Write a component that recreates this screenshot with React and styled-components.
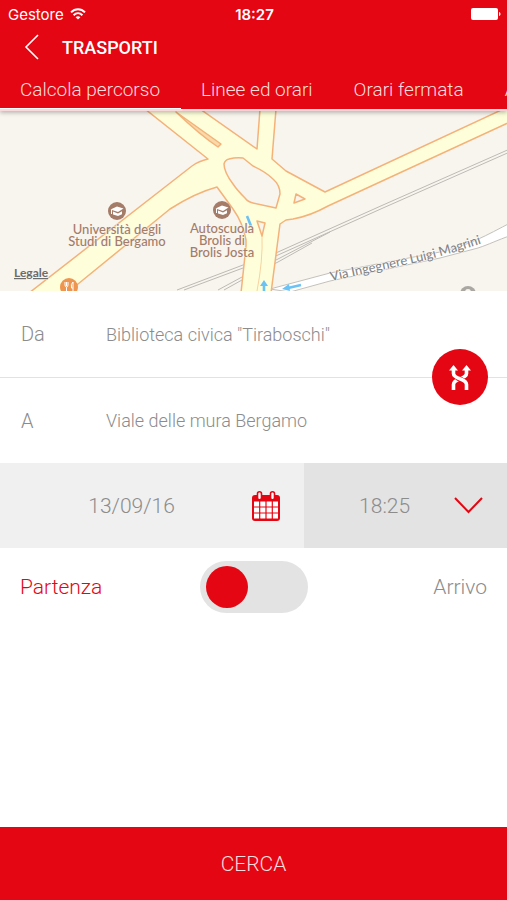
import React, {useState} from 'react';
import styled, {createGlobalStyle} from 'styled-components';

const red = "#e40612";
const grey = "#8c8c8c";

const GlobalStyle = createGlobalStyle`
  * {
    box-sizing: border-box;
  }

  body {
    margin: 0;
    background: #fff;
    font-family: Roboto, "Liberation Sans", sans-serif;
    font-weight: 300;
  }

  button, input, select {
    font: inherit;
    color: inherit;
    margin: 0;
    padding: 0;
    border: 0;
    background: none;
    border-radius: 0;
    outline: none;
  }

  button, select {
    cursor: pointer;
  }
`;

const Page = styled.div`
  display: flex;
  flex-direction: column;
  min-height: 100vh;
`;

const Header = styled.header`
  position: relative;
  z-index: 1;
  background: ${red};
  color: #fff;
  border-bottom: 2px solid #fbd9da;
  box-shadow: 0 2px 4px #00000040;
`;

const StatusBar = styled.div`
  display: grid;
  grid-template-columns: 1fr auto 1fr;
  align-items: center;
  height: 28px;
  padding: 0 6px 0 8px;
  font-family: Inter, "Liberation Sans", sans-serif;
  font-size: 15px;
  font-weight: 400;
`;

const Carrier = styled.div`
  display: flex;
  align-items: center;
  gap: 6px;
`;

const Clock = styled.time`
  font-weight: 600;
`;

const BatterySvg = styled.svg`
  justify-self: end;
`;

const TitleBar = styled.div`
  display: flex;
  align-items: center;
  gap: 22px;
  height: 38px;
  padding-left: 24px;
`;

const Back = styled.button`
  display: flex;
`;

const Title = styled.h1`
  margin: 0;
  font-size: 18px;
  font-weight: 500;
`;

const Tabs = styled.nav`
  display: flex;
  overflow: hidden;
`;

const Tab = styled.a`
  flex: none;
  height: 43px;
  padding: 0 21px 0 20px;
  border-bottom: 1px solid ${props => props.$active ? "#fff" : "transparent"};
  color: #ffdcdd;
  font-size: 19px;
  line-height: 48px;
  text-decoration: none;
`;

const MapSvg = styled.svg`
  display: block;
  width: 100%;
  height: 180px;
  background: #f8f5ef;
`;

const Poi = styled.text`
  fill: #a47c68;
  stroke: #f8f5ef;
  stroke-width: 1px;
  paint-order: stroke;
  text-anchor: middle;
  font-family: Lato, "Noto Sans", sans-serif;
  font-size: 13px;
  font-weight: 500;
`;

const Street = styled(Poi)`
  fill: #858585;
  stroke: #fff;
  text-anchor: start;
`;

const Legal = styled(Poi)`
  fill: #6c6c6c;
  text-anchor: start;
  text-decoration: underline;
  font-size: 12px;
  font-weight: 700;
`;

const Places = styled.div`
  position: relative;
`;

const Place = styled.label`
  display: grid;
  grid-template-columns: 85px 1fr;
  align-items: center;
  height: 86px;
  padding: 0 90px 0 21px;
  color: ${grey};
  font-size: 20px;

  & + & {
    border-top: 1px solid #e2e2e2;
  }
`;

const PlaceInput = styled.input`
  width: 100%;
  font-size: 18px;
`;

const Swap = styled.button`
  position: absolute;
  top: 50%;
  right: 19px;
  display: flex;
  align-items: center;
  justify-content: center;
  width: 56px;
  height: 56px;
  border-radius: 50%;
  background: ${red};
  transform: translateY(-50%);
`;

const When = styled.div`
  display: grid;
  grid-template-columns: 3fr 2fr;
  height: 85px;
  color: ${grey};
  font-size: 21px;
`;

const Field = styled.label`
  display: grid;
  grid-template-columns: 1fr auto;
  align-items: center;
  padding: 0 24px 0 11px;
  background: ${props => props.$dark ? "#e3e3e3" : "#f0f0f0"};
`;

const DateInput = styled.input`
  width: 100%;
  min-width: 0;
  text-align: center;
`;

const TimeSelect = styled.select`
  width: 100%;
  text-align-last: center;
  appearance: none;
`;

const Direction = styled.div`
  display: grid;
  grid-template-columns: 1fr auto 1fr;
  align-items: center;
  height: 77px;
  padding: 0 20px;
  font-size: 21px;
`;

const DirectionLabel = styled.label`
  color: ${props => props.$active ? red : grey};

  &:last-child {
    text-align: right;
  }
`;

const Switch = styled.input`
  display: flex;
  align-items: center;
  width: 108px;
  height: 52px;
  padding: 0 6px;
  border-radius: 26px;
  background: #e3e3e3;
  appearance: none;
  cursor: pointer;

  &::before {
    content: "";
    width: 42px;
    height: 42px;
    border-radius: 50%;
    background: ${red};
  }

  &:checked {
    justify-content: flex-end;
  }
`;

const Submit = styled.button`
  height: 73px;
  margin-top: auto;
  background: ${red};
  color: #ffdcdd;
  font-size: 21px;
`;

const Wifi = () => (
    <svg width="16" height="12" viewBox="0 0 16 12" fill="none" stroke="#fff" strokeWidth="2">
        <path d="M1 4.4C5 .2 11 .2 15 4.4"/>
        <path d="M3.6 7.2c2.6-2.6 6.2-2.6 8.8 0"/>
        <path d="M8 11.6L5.6 9.2c1.4-1.3 3.4-1.3 4.8 0z" fill="#fff" stroke="none"/>
    </svg>
);

const Battery = () => (
    <BatterySvg width="30" height="12" viewBox="0 0 30 12" fill="#fff">
        <rect width="27" height="12" rx="2"/>
        <path d="M28 4c2 .5 2 3.5 0 4z"/>
    </BatterySvg>
);

const SwapIcon = () => (
    <svg width="22" height="25" viewBox="0 0 22 25" fill="none">
        <path d="M17.5 4v4.5c0 6-13 4.500-13 11V25" stroke="#fff" strokeWidth="3.6"/>
        <path d="M6.5 11c3 4 10 4 10.800 8" stroke={red} strokeWidth="5.4"/>
        <path d="M4.500 4v4.500c0 6 13 4.500 13 11V25" stroke="#fff" strokeWidth="3.6"/>
        <path d="M0 5.500L4.500 0 9 5.500zM13 5.500L17.500 0 22 5.500z" fill="#fff"/>
    </svg>
);

const CalendarIcon = () => (
    <svg width="28" height="30" viewBox="0 0 28 30">
        <rect y="4" width="28" height="26" rx="3" fill={red}/>
        <g fill="#fff">
            {[10.5, 16.5, 22.5].map(y => [2, 8.3, 14.6, 20.9].map(x => (
                <rect key={x + "-" + y} x={x} y={y} width="5.1" height="5"/>
            )))}
        </g>
        <g fill="#fff" stroke={red} strokeWidth="1.6">
            <rect x="5.5" y=".8" width="4" height="8" rx="2"/>
            <rect x="18.5" y=".8" width="4" height="8" rx="2"/>
        </g>
    </svg>
);

const School = ({x, y}) => (
    <g transform={`translate(${x} ${y})`}>
        <circle r="9" fill="#a47c68"/>
        <path d="M-6.500-1.500L0-4.500l6.500 2L1 1zM-4 .5L1 2.500l4-2.300v3L1 5l-5-1.500z" fill="#fff"/>
        <path d="M-5.500-1v4" stroke="#fff"/>
    </g>
);

const CityMap = () => (
    <MapSvg viewBox="0 1 507 180" preserveAspectRatio="xMidYMid slice" role="img" aria-label="Mappa">
        <g fill="none" stroke="#bdbab5" strokeWidth="1">
            <path d="M512 38L383 95 278 142 243 155 177 180M512 41L383 98 278 145 243 158 184 180"/>
            <path d="M330 122L278 149 242 167 218 180M312 133L278 152 242 170 224 180"/>
        </g>
        <path
            d="M270 179L330 163 440 142C470 135 485 126 512 112V125C495 131 490 134 478 138L440 148 330 171 290 182z"
            fill="#fff" stroke="#c4c1bc"/>
        <g fill="#feffda" stroke="#f4b279" strokeWidth="1.5" strokeLinejoin="round">
            <path d="M145-1L208 49Q199 51 192 56L29 183H67L78 174 170 99Q195 83 217 77L233 99Q243 113 246 130V136L241 183H271L280 114 286 110 293 109Q310 106 328 96L512 11V-5L325 82 286 61 272 49 276-1H260L257 39 200-1z"/>
            <path d="M176 2L221 34 218 37Q200 25 176 2z" fill="#f9d9a8"/>
            <g fill="#f8f5ef">
                <path d="M224 54Q225 50 229 49 236 47 243 48L253 56Q266 62 273 69 280 75 280 84L276 98 253 93Q248 92 245 88 237 80 233 74 224 62 224 54z"/>
                <path d="M296 84L305 89 294 93z"/>
                <path d="M257 111L265 113 262 126z"/>
            </g>
            <path d="M262 126Q263 150 257 181" fill="none" strokeWidth=".6"/>
        </g>
        <g fill="none" stroke="#6bc2f5" strokeWidth="2.6">
            <path d="M247 106l4 10M264 181v-8M301 175l-13 3"/>
            <path d="M260 176l4-6 4 6zM289 174l-7 5 8 2z" fill="#6bc2f5" stroke="none"/>
        </g>
        <School x={117} y={101}/>
        <School x={222} y={100}/>
        <circle cx="69" cy="177" r="9" fill="#ee9650"/>
        <path d="M65 172v3q0 2 1.500 2v5M68 172v3q0 2-1.500 2M66.500 172v4M73 182v-10q-2.500 2-1.500 6h1.500" fill="none"
              stroke="#fff"/>
        <circle cx="468" cy="184" r="8" fill="#aaa7a3"/>
        <circle cx="468" cy="182" r="3" fill="#f8f5ef"/>
        <Poi x="117" y="124">Università degli</Poi>
        <Poi x="117" y="136">Studi di Bergamo</Poi>
        <Poi x="222" y="123">Autoscuola</Poi>
        <Poi x="222" y="135">Brolis di</Poi>
        <Poi x="222" y="147">Brolis Josta</Poi>
        <path id="magrini" d="M331 171L405 155Q450 145 500 127" fill="none"/>
        <Street>
            <textPath href="#magrini">Via Ingegnere Luigi Magrini</textPath>
        </Street>
        <Legal x="14" y="167">Legale</Legal>
    </MapSvg>
);

const tabs = ["Calcola percorso", "Linee ed orari", "Orari fermata", "Avvisi"];

function App() {
    const [tab, setTab] = useState(tabs[0]);
    const [from, setFrom] = useState('Biblioteca civica "Tiraboschi"');
    const [to, setTo] = useState("Viale delle mura Bergamo");
    const [date, setDate] = useState("13/09/16");
    const [arrival, setArrival] = useState(false);

    const swap = () => {
        setFrom(to);
        setTo(from);
    };

    return (
        <Page>
            <GlobalStyle/>
            <Header>
                <StatusBar>
                    <Carrier>Gestore <Wifi/></Carrier>
                    <Clock>18:27</Clock>
                    <Battery/>
                </StatusBar>
                <TitleBar>
                    <Back aria-label="Indietro">
                        <svg width="16" height="26" viewBox="0 0 16 26" fill="none" stroke="#fff" strokeWidth="1.6">
                            <path d="M14 1L2 13l12 12"/>
                        </svg>
                    </Back>
                    <Title>TRASPORTI</Title>
                </TitleBar>
                <Tabs>
                    {tabs.map(name => (
                        <Tab key={name} href="#" $active={name === tab} onClick={() => setTab(name)}>{name}</Tab>
                    ))}
                </Tabs>
            </Header>
            <CityMap/>
            <Places>
                <Place>
                    Da
                    <PlaceInput value={from} onChange={e => setFrom(e.target.value)}/>
                </Place>
                <Place>
                    A
                    <PlaceInput value={to} onChange={e => setTo(e.target.value)}/>
                </Place>
                <Swap aria-label="Inverti" onClick={swap}>
                    <SwapIcon/>
                </Swap>
            </Places>
            <When>
                <Field>
                    <DateInput aria-label="Data" value={date} onChange={e => setDate(e.target.value)}/>
                    <CalendarIcon/>
                </Field>
                <Field $dark>
                    <TimeSelect aria-label="Ora" defaultValue="18:25">
                        <option>18:25</option>
                        <option>18:30</option>
                    </TimeSelect>
                    <svg width="29" height="17" viewBox="0 0 29 17" fill="none" stroke={red} strokeWidth="2">
                        <path d="M1 1l13.500 14L28 1"/>
                    </svg>
                </Field>
            </When>
            <Direction>
                <DirectionLabel htmlFor="arrival" $active={!arrival}>Partenza</DirectionLabel>
                <Switch id="arrival" type="checkbox" checked={arrival}
                        onChange={e => setArrival(e.target.checked)}/>
                <DirectionLabel htmlFor="arrival" $active={arrival}>Arrivo</DirectionLabel>
            </Direction>
            <Submit>CERCA</Submit>
        </Page>
    )
}

export default App;
